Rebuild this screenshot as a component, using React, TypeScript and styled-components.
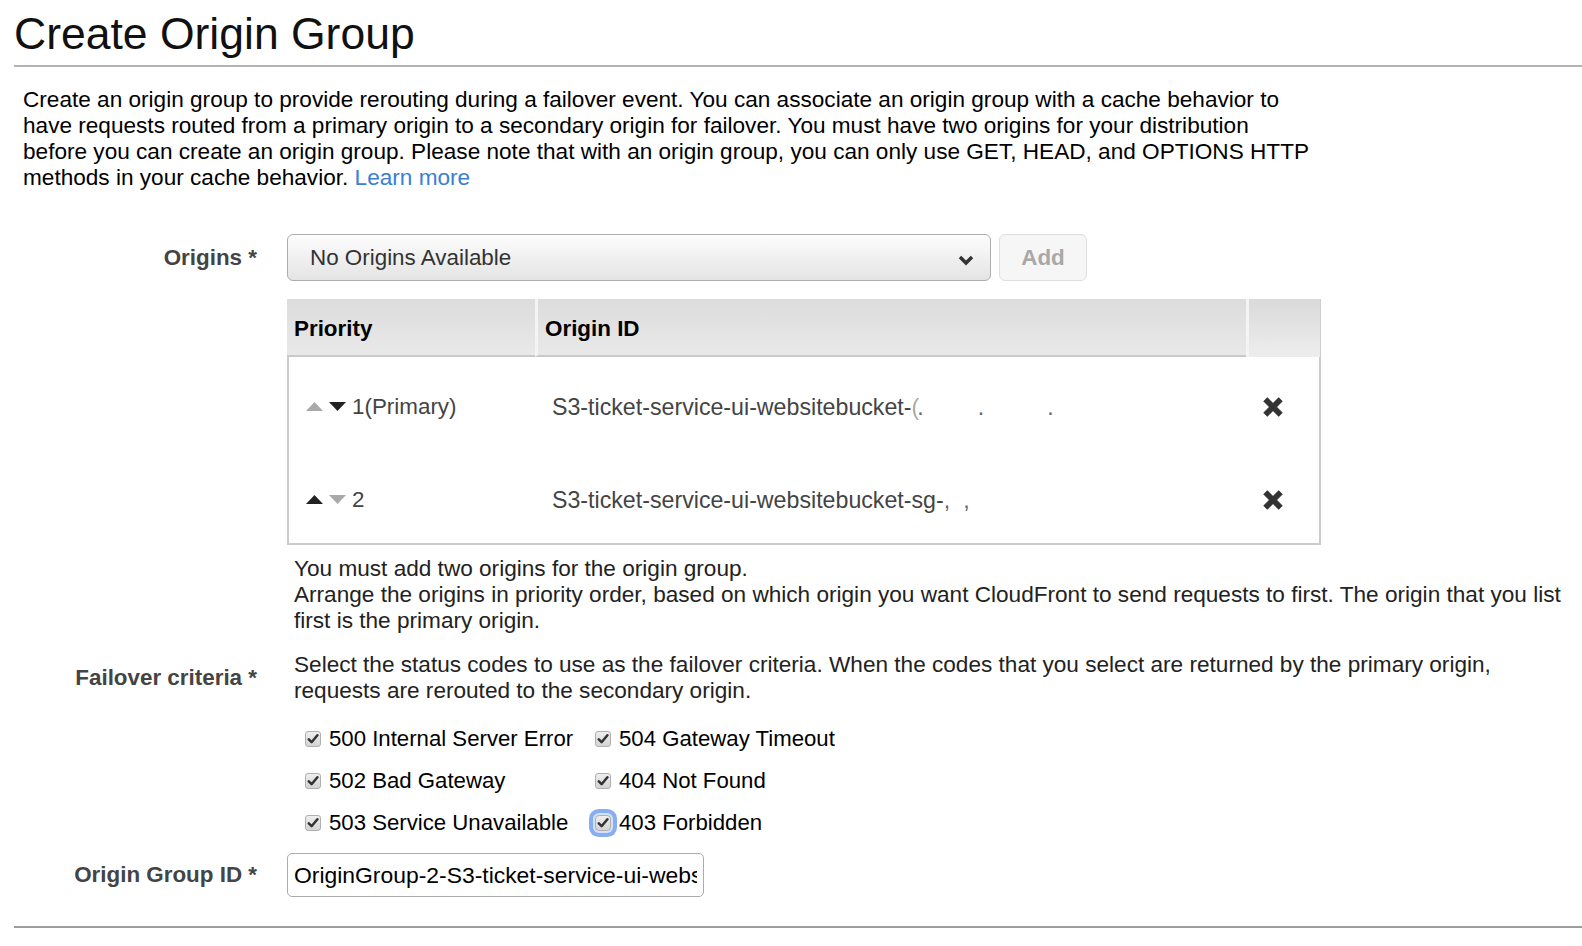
import * as React from "react";
import styled, { createGlobalStyle, css } from "styled-components";

const GlobalStyle = createGlobalStyle`
  html, body {
    margin: 0;
    padding: 0;
    background: #fff;
  }
  body {
    font-family: "Liberation Sans", Arial, Helvetica, sans-serif;
    font-size: 22.4px;
    line-height: 26px;
    color: #000;
  }
`;

const Page = styled.div`
  padding: 10px 0 20px 14px;
`;

const Title = styled.h1`
  margin: 0;
  font-size: 44.5px;
  font-weight: 400;
  line-height: 48px;
  color: #111;
`;

const Rule = styled.hr<{ $tone: string; $top: number }>`
  margin: ${(p) => p.$top}px 0 0;
  border: 0;
  border-top: 2px solid ${(p) => p.$tone};
`;

const Intro = styled.p`
  margin: 20px 0 0 9px;
  max-width: 1290px;
  font-size: 22.6px;
`;

const LearnMore = styled.a`
  color: #3a80d2;
  text-decoration: none;
`;

const Form = styled.div`
  margin-top: 43px;
`;

const Row = styled.div<{ $top?: number }>`
  display: grid;
  grid-template-columns: 243px 1fr;
  column-gap: 30px;
  align-items: center;
  margin-top: ${(p) => p.$top ?? 0}px;
`;

const Label = styled.div`
  text-align: right;
  font-weight: 700;
  color: #444;
`;

const Controls = styled.div`
  display: flex;
  gap: 8px;
`;

const SelectBox = styled.div`
  box-sizing: border-box;
  width: 704px;
  height: 47px;
  display: flex;
  align-items: center;
  justify-content: space-between;
  padding: 1px 16px 0 22px;
  border: 1px solid #adadad;
  border-radius: 6px;
  background: linear-gradient(#fdfdfd, #e4e4e4);
  color: #333;

  svg {
    margin-top: 4px;
  }
`;

const AddButton = styled.button`
  box-sizing: border-box;
  width: 88px;
  height: 47px;
  padding: 1px 0 0;
  border: 1px solid #dedede;
  border-radius: 6px;
  background: #f6f6f6;
  font: inherit;
  font-weight: 700;
  color: #a8a8a8;
`;

/* origins table */

const Table = styled.div`
  width: 1034px;
`;

const HeadRow = styled.div`
  display: grid;
  grid-template-columns: 248px 711px 75px;
`;

const HeadCell = styled.div<{ $sep?: boolean; $plain?: boolean }>`
  box-sizing: border-box;
  height: 58px;
  display: flex;
  align-items: center;
  padding: 3px 0 0 7px;
  font-weight: 700;
  background: linear-gradient(#dcdcdc, #e9e9e9);
  border-bottom: 2px solid #c9c9c9;
  ${(p) =>
    p.$sep &&
    css`
      border-left: 3px solid #f4f4f4;
    `}
  ${(p) =>
    p.$plain &&
    css`
      border-bottom: 0;
      border-right: 1px solid #cfcfcf;
      background: linear-gradient(#dadada, #ededed);
    `}
`;

const Body = styled.div`
  border: 2px solid #cccccc;
  border-top: 0;
`;

const BodyRow = styled.div`
  display: grid;
  grid-template-columns: 246px 711px 73px;
  height: 93px;
  align-items: center;
  padding-top: 6px;
  box-sizing: border-box;
`;

const Cell = styled.div`
  display: flex;
  align-items: center;
  padding-left: 17px;
  color: #444;
`;

const Arrows = styled.span`
  display: inline-flex;
  align-items: center;
  gap: 6px;
  margin-right: 6px;
`;

const OriginId = styled.span`
  white-space: nowrap;
  font-size: 23.2px;
  color: #444;
`;

const Mark = styled.span<{ $gap: number }>`
  margin-left: ${(p) => p.$gap}px;
  color: #666;
`;

const Faint = styled.span`
  color: #aaa;
`;

const RemoveButton = styled.button`
  display: flex;
  padding: 0;
  border: 0;
  background: none;
  cursor: pointer;
`;

/* texts and checkboxes */

const Help = styled.div<{ $top?: number }>`
  padding: ${(p) => p.$top ?? 0}px 10px 0 7px;
  font-size: 22.6px;
  color: #222;
`;

const CheckGrid = styled.div`
  display: grid;
  grid-template-columns: 290px 1fr;
  grid-auto-rows: 42px;
  align-items: center;
  padding-left: 18px;
`;

const CheckItem = styled.label`
  display: flex;
  align-items: center;
  gap: 8px;
  font-size: 22.2px;
  color: #000;
`;

const Box = styled.span<{ $focused?: boolean }>`
  box-sizing: border-box;
  width: 16px;
  height: 16px;
  display: flex;
  align-items: center;
  justify-content: center;
  border: 1px solid #b0b0b0;
  border-radius: 3px;
  background: linear-gradient(#eeeeee, #d4d4d4);
  ${(p) =>
    p.$focused &&
    css`
      box-shadow: 0 0 0 2px #d3e2fa, 0 0 0 6px #86aef0;
      border-radius: 4px;
    `}
`;

const TextInput = styled.input`
  box-sizing: border-box;
  width: 417px;
  height: 44px;
  padding: 0 6px;
  border: 1px solid #acacac;
  border-radius: 5px;
  font: inherit;
  font-size: 22.9px;
  color: #000;
  background: #fff;
  outline: none;
`;

const Triangle: React.FC<{ up?: boolean; on?: boolean }> = ({ up, on }) => (
  <svg width="17" height="9" viewBox="0 0 17 9">
    <polygon
      points={up ? "0,9 8.5,0 17,9" : "0,0 8.5,9 17,0"}
      fill={on ? "#222" : "#a9a9a9"}
    />
  </svg>
);

const Cross = () => (
  <svg width="20" height="20" viewBox="0 0 20 20">
    <path
      d="M4.3 0.6 L10 6.3 L15.7 0.6 L19.4 4.3 L13.7 10 L19.4 15.7 L15.7 19.4 L10 13.7 L4.3 19.4 L0.6 15.7 L6.3 10 L0.6 4.3 Z"
      fill="#333"
      stroke="#333"
      strokeWidth="0.6"
      strokeLinejoin="round"
    />
  </svg>
);

const Chevron = () => (
  <svg width="16" height="11" viewBox="0 0 16 11">
    <polyline
      points="2,2 8,8 14,2"
      fill="none"
      stroke="#333"
      strokeWidth="3.4"
    />
  </svg>
);

const Tick = () => (
  <svg width="12" height="12" viewBox="0 0 12 12">
    <path
      d="M1.8 6.4 L4.6 9.2 L10.4 2.2"
      fill="none"
      stroke="#333"
      strokeWidth="2.5"
      strokeLinecap="round"
      strokeLinejoin="round"
    />
  </svg>
);

const codes: [string, boolean][] = [
  ["500 Internal Server Error", false],
  ["504 Gateway Timeout", false],
  ["502 Bad Gateway", false],
  ["404 Not Found", false],
  ["503 Service Unavailable", false],
  ["403 Forbidden", true]
];

const App: React.FC = () => (
  <Page>
    <GlobalStyle />
    <Title>Create Origin Group</Title>
    <Rule $tone="#b3b3b3" $top={7} />
    <Intro>
      Create an origin group to provide rerouting during a failover event. You
      can associate an origin group with a cache behavior to have requests
      routed from a primary origin to a secondary origin for failover. You must
      have two origins for your distribution before you can create an origin
      group. Please note that with an origin group, you can only use GET, HEAD,
      and OPTIONS HTTP methods in your cache behavior.{" "}
      <LearnMore href="#">Learn more</LearnMore>
    </Intro>

    <Form>
      <Row>
        <Label>Origins *</Label>
        <Controls>
          <SelectBox>
            <span>No Origins Available</span>
            <Chevron />
          </SelectBox>
          <AddButton disabled>Add</AddButton>
        </Controls>
      </Row>

      <Row $top={18}>
        <span />
        <Table>
          <HeadRow>
            <HeadCell>Priority</HeadCell>
            <HeadCell $sep>Origin ID</HeadCell>
            <HeadCell $sep $plain />
          </HeadRow>
          <Body>
            <BodyRow>
              <Cell>
                <Arrows>
                  <Triangle up />
                  <Triangle on />
                </Arrows>
                1(Primary)
              </Cell>
              <Cell>
                <OriginId>
                  S3-ticket-service-ui-websitebucket-<Faint>(</Faint>
                  <Mark $gap={-2}>.</Mark>
                  <Mark $gap={54}>.</Mark>
                  <Mark $gap={63}>.</Mark>
                </OriginId>
              </Cell>
              <Cell>
                <RemoveButton aria-label="Remove">
                  <Cross />
                </RemoveButton>
              </Cell>
            </BodyRow>
            <BodyRow>
              <Cell>
                <Arrows>
                  <Triangle up on />
                  <Triangle />
                </Arrows>
                2
              </Cell>
              <Cell>
                <OriginId>
                  S3-ticket-service-ui-websitebucket-sg-
                  <Mark $gap={0}>,</Mark>
                  <Mark $gap={13}>,</Mark>
                </OriginId>
              </Cell>
              <Cell>
                <RemoveButton aria-label="Remove">
                  <Cross />
                </RemoveButton>
              </Cell>
            </BodyRow>
          </Body>
        </Table>
      </Row>

      <Row $top={10}>
        <span />
        <Help $top={1}>
          You must add two origins for the origin group.
          <br />
          Arrange the origins in priority order, based on which origin you want
          CloudFront to send requests to first. The origin that you list first
          is the primary origin.
        </Help>
      </Row>

      <Row $top={18}>
        <Label>Failover criteria *</Label>
        <Help>
          Select the status codes to use as the failover criteria. When the
          codes that you select are returned by the primary origin, requests
          are rerouted to the secondary origin.
        </Help>
      </Row>

      <Row $top={14}>
        <span />
        <CheckGrid>
          {codes.map(([text, focused]) => (
            <CheckItem key={text}>
              <Box $focused={focused}>
                <Tick />
              </Box>
              {text}
            </CheckItem>
          ))}
        </CheckGrid>
      </Row>

      <Row $top={9}>
        <Label>Origin Group ID *</Label>
        <div>
          <TextInput
            readOnly
            value="OriginGroup-2-S3-ticket-service-ui-websitebucket-sg"
          />
        </div>
      </Row>
    </Form>

    <Rule $tone="#9c9c9c" $top={29} />
  </Page>
);

export default App;
